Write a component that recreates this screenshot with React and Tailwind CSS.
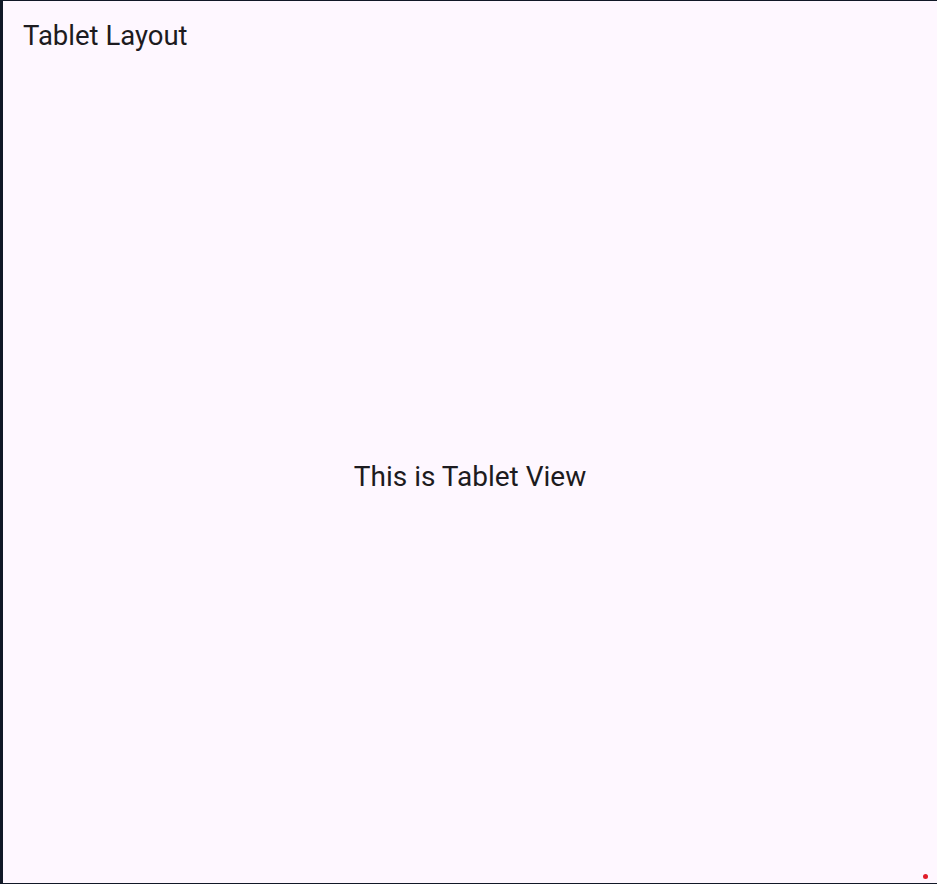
export default function App() {
  return (
    <div className="h-[884px] w-[937px] bg-[#111827] pl-[3px] pt-px pb-px" style={{ fontFamily: "Roboto, sans-serif" }}>
      <div className="relative flex h-full flex-col bg-[#fef7ff] text-[#1d1b20]">
        <header className="flex h-[70px] shrink-0 items-center px-[20px]">
          <h1 className="text-[27.5px] leading-none">Tablet Layout</h1>
        </header>
        <main className="flex flex-1 items-center justify-center">
          <p className="text-[28px] leading-none">This is Tablet View</p>
        </main>
        <span className="absolute bottom-[4px] right-[9px] h-[5px] w-[5px] rounded-full bg-[#e11d2a]"></span>
      </div>
    </div>
  );
}
